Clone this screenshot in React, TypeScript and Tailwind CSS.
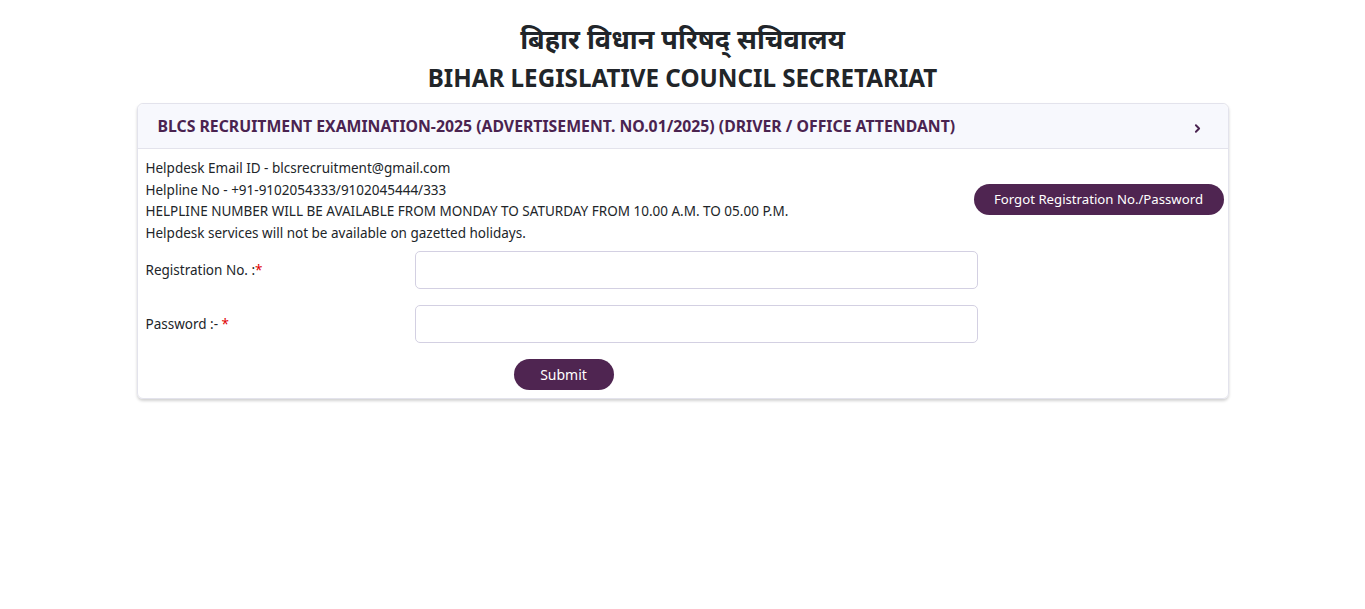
import { ChevronRight } from "lucide-react";

const font = { fontFamily: '"Noto Sans", "Open Sans", sans-serif' };

export default function App() {
  return (
    <div className="min-h-screen bg-white text-[#212529]" style={font}>
      <header className="pt-[18px] text-center">
        <h1 className="text-[27px] font-bold leading-[42px] text-[#212529]">बिहार विधान परिषद् सचिवालय</h1>
        <h2 className="text-[24.2px] font-bold leading-[36px] text-[#212529]">BIHAR LEGISLATIVE COUNCIL SECRETARIAT</h2>
      </header>

      <main className="mx-auto mt-[7px] w-[1092px] rounded-md border border-[#e3e3ec] shadow-[0_2px_3px_rgba(0,0,0,0.18)]">
        <div className="flex h-[45px] items-center justify-between rounded-t-md border-b border-[#e3e3ec] bg-[#f7f8fd] pl-[20px] pr-[24px]">
          <span className="mt-[2px] text-[15.8px] font-bold text-[#4a2350]">
            BLCS RECRUITMENT EXAMINATION-2025 (ADVERTISEMENT. NO.01/2025) (DRIVER / OFFICE ATTENDANT)
          </span>
          <ChevronRight className="mt-[4px] h-[13px] w-[13px] text-[#4a2350]" strokeWidth={3.5} />
        </div>

        <div className="pb-[8px] pl-[8px] pr-[4px] pt-[9px]">
          <div className="flex items-center justify-between">
            <div className="text-[13.5px] leading-[21.5px] text-[#212529]">
              <p>Helpdesk Email ID - blcsrecruitment@gmail.com</p>
              <p>Helpline No - +91-9102054333/9102045444/333</p>
              <p>HELPLINE NUMBER WILL BE AVAILABLE FROM MONDAY TO SATURDAY FROM 10.00 A.M. TO 05.00 P.M.</p>
              <p>Helpdesk services will not be available on gazetted holidays.</p>
            </div>
            <button className="-mt-[4px] h-[31px] w-[250px] rounded-full bg-[#4f2551] pt-[2px] text-[13.2px] text-white">
              Forgot Registration No./Password
            </button>
          </div>

          <div className="mt-[7px] flex flex-col gap-[16px]">
            <div className="flex items-center">
              <label className="w-[269px] text-[13.5px]">
                Registration No. :<span className="text-[#e00000]">*</span>
              </label>
              <input type="text" className="h-[38px] w-[563px] rounded-[5px] border border-[#d3d0e2] bg-white" />
            </div>
            <div className="flex items-center">
              <label className="w-[269px] text-[13.5px]">
                Password :- <span className="text-[#e00000]">*</span>
              </label>
              <input type="password" className="h-[38px] w-[563px] rounded-[5px] border border-[#d3d0e2] bg-white" />
            </div>
          </div>

          <div className="mt-[16px] pl-[368px]">
            <button className="h-[31px] w-[100px] rounded-full bg-[#4f2551] text-[14px] text-white">Submit</button>
          </div>
        </div>
      </main>
    </div>
  );
}
